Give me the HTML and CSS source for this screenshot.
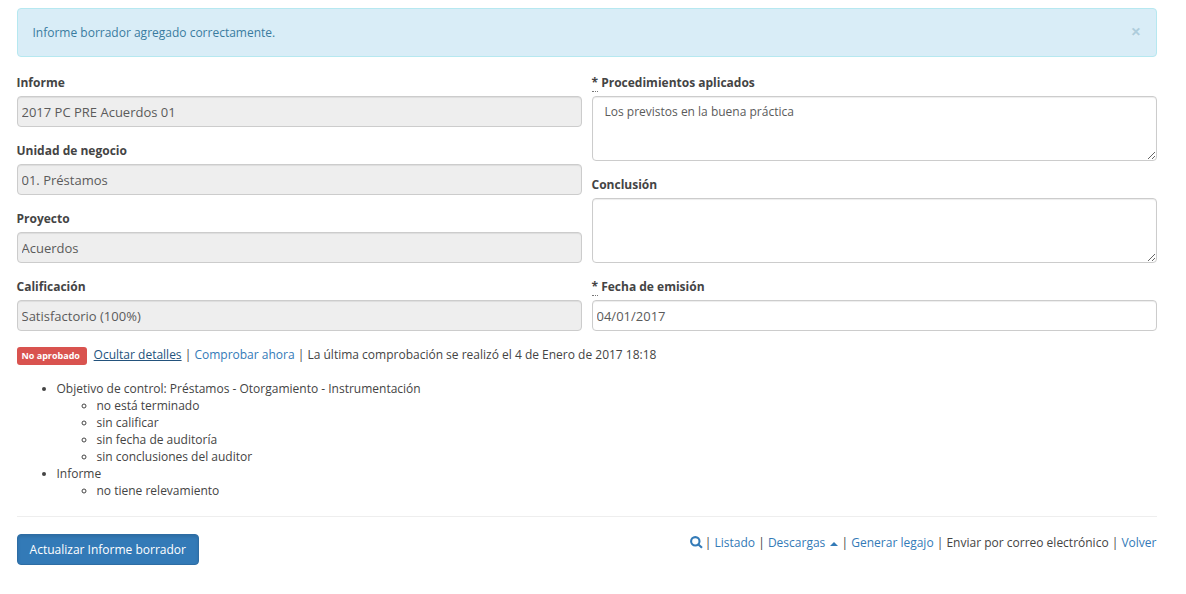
FILE: index.html
```html
<!DOCTYPE html>
<html lang="es">
<head>
<meta charset="utf-8">
<title>Informe borrador</title>
<link rel="stylesheet" href="styles.css">
</head>
<body>
<div class="alert"><span>Informe borrador agregado correctamente.</span><button class="close" type="button">×</button></div>
<form class="form">
  <div class="columns">
    <div class="column">
      <div class="group"><label>Informe</label><input class="control" readonly value="2017 PC PRE Acuerdos 01"></div>
      <div class="group"><label>Unidad de negocio</label><input class="control" readonly value="01. Préstamos"></div>
      <div class="group"><label>Proyecto</label><input class="control" readonly value="Acuerdos"></div>
      <div class="group"><label>Calificación</label><input class="control" readonly value="Satisfactorio (100%)"></div>
    </div>
    <div class="column">
      <div class="group"><label><abbr title="Requerido">*</abbr> Procedimientos aplicados</label><textarea class="control area">Los previstos en la buena práctica</textarea></div>
      <div class="group"><label>Conclusión</label><textarea class="control area"></textarea></div>
      <div class="group"><label><abbr title="Requerido">*</abbr> Fecha de emisión</label><input class="control" value="04/01/2017"></div>
    </div>
  </div>
  <div class="status"><span class="badge">No aprobado</span><a class="active" href="#">Ocultar detalles</a> | <a href="#">Comprobar ahora</a> | La última comprobación se realizó el 4 de Enero de 2017 18:18</div>
  <ul class="errors">
    <li>Objetivo de control: Préstamos - Otorgamiento - Instrumentación
      <ul><li>no está terminado</li><li>sin calificar</li><li>sin fecha de auditoría</li><li>sin conclusiones del auditor</li></ul>
    </li>
    <li>Informe
      <ul><li>no tiene relevamiento</li></ul>
    </li>
  </ul>
  <hr>
  <div class="footer">
    <button class="primary" type="button">Actualizar Informe borrador</button>
    <div class="links"><a href="#"><svg class="search" viewBox="0 0 13 13"><circle cx="5.3" cy="5.3" r="4.2"/><path d="M8.4 8.4l3.6 3.4"/></svg></a> | <a href="#">Listado</a> | <a href="#">Descargas <span class="caret"></span></a> | <a href="#">Generar legajo</a> | Enviar por correo electrónico | <a href="#">Volver</a></div>
  </div>
</form>
</body>
</html>
```
FILE: styles.css
```css
* { box-sizing: border-box; }
body { margin: 0; padding: 8px 29.5px 0 16.5px; background: #fff; color: #444; font: 12px/17px "Open Sans", sans-serif; }
a { color: #337ab7; text-decoration: none; }
.alert { display: flex; justify-content: space-between; align-items: flex-start; height: 49px; padding: 15px 14.5px 15px 15px; border: 1px solid #b6e8f0; border-radius: 4px; background: #d9edf7; color: #3a7ca0; }
.close { height: 14px; padding: 0; border: 0; background: none; color: #31708f; opacity: .25; font: bold 18px/14px "Open Sans", sans-serif; text-shadow: 0 1px 0 #fff; }
.columns { display: grid; grid-template-columns: 565px 565px; column-gap: 10px; margin-top: 17px; }
.group { margin-bottom: 15px; }
label { display: block; height: 17px; margin-bottom: 5px; font-weight: 700; }
abbr { border-bottom: 1px dotted #777; text-decoration: none; }
.control { display: block; width: 100%; height: 31px; padding: 5px 4px; border: 1px solid #ccc; border-radius: 4px; background: #fff; box-shadow: inset 0 1px 1px rgba(0,0,0,.075); color: #5b5b5b; font: 13px/19px "Open Sans", sans-serif; }
.control[readonly] { background: #eee; }
.area { height: 65px; padding: 6px 12px; font-size: 12px; line-height: 17px; resize: vertical; }
.status { height: 17px; }
.badge { display: inline-block; height: 18px; margin-right: 6.7px; padding: 0 7px 0 5px; border-radius: 3px; background: #d9534f; color: #fff; font-size: 9px; font-weight: 700; line-height: 17px; }
.active { color: #23527c; text-decoration: underline; }
.errors { margin: 17px 0; padding-left: 40px; }
.errors ul { margin: 0; padding-left: 40px; }
hr { margin: 17px 0; border: 0; border-top: 1px solid #eee; }
.footer { display: flex; justify-content: space-between; }
.primary { width: 182px; height: 31px; padding: 0 0 0 .5px; border: 1px solid #2e6da4; border-radius: 4px; background: #337ab7; box-shadow: inset 0 2px 3px rgba(0,0,0,.1); color: #fff; font: 12px/17px "Open Sans", sans-serif; }
.links { white-space: nowrap; }
.search { width: 13px; height: 13px; margin-right: -1px; vertical-align: -2px; fill: none; stroke: #337ab7; stroke-width: 2.1; }
.caret { display: inline-block; margin-left: 2px; border: 4px solid transparent; border-top: 0; border-bottom-color: #337ab7; vertical-align: 1px; }
```
